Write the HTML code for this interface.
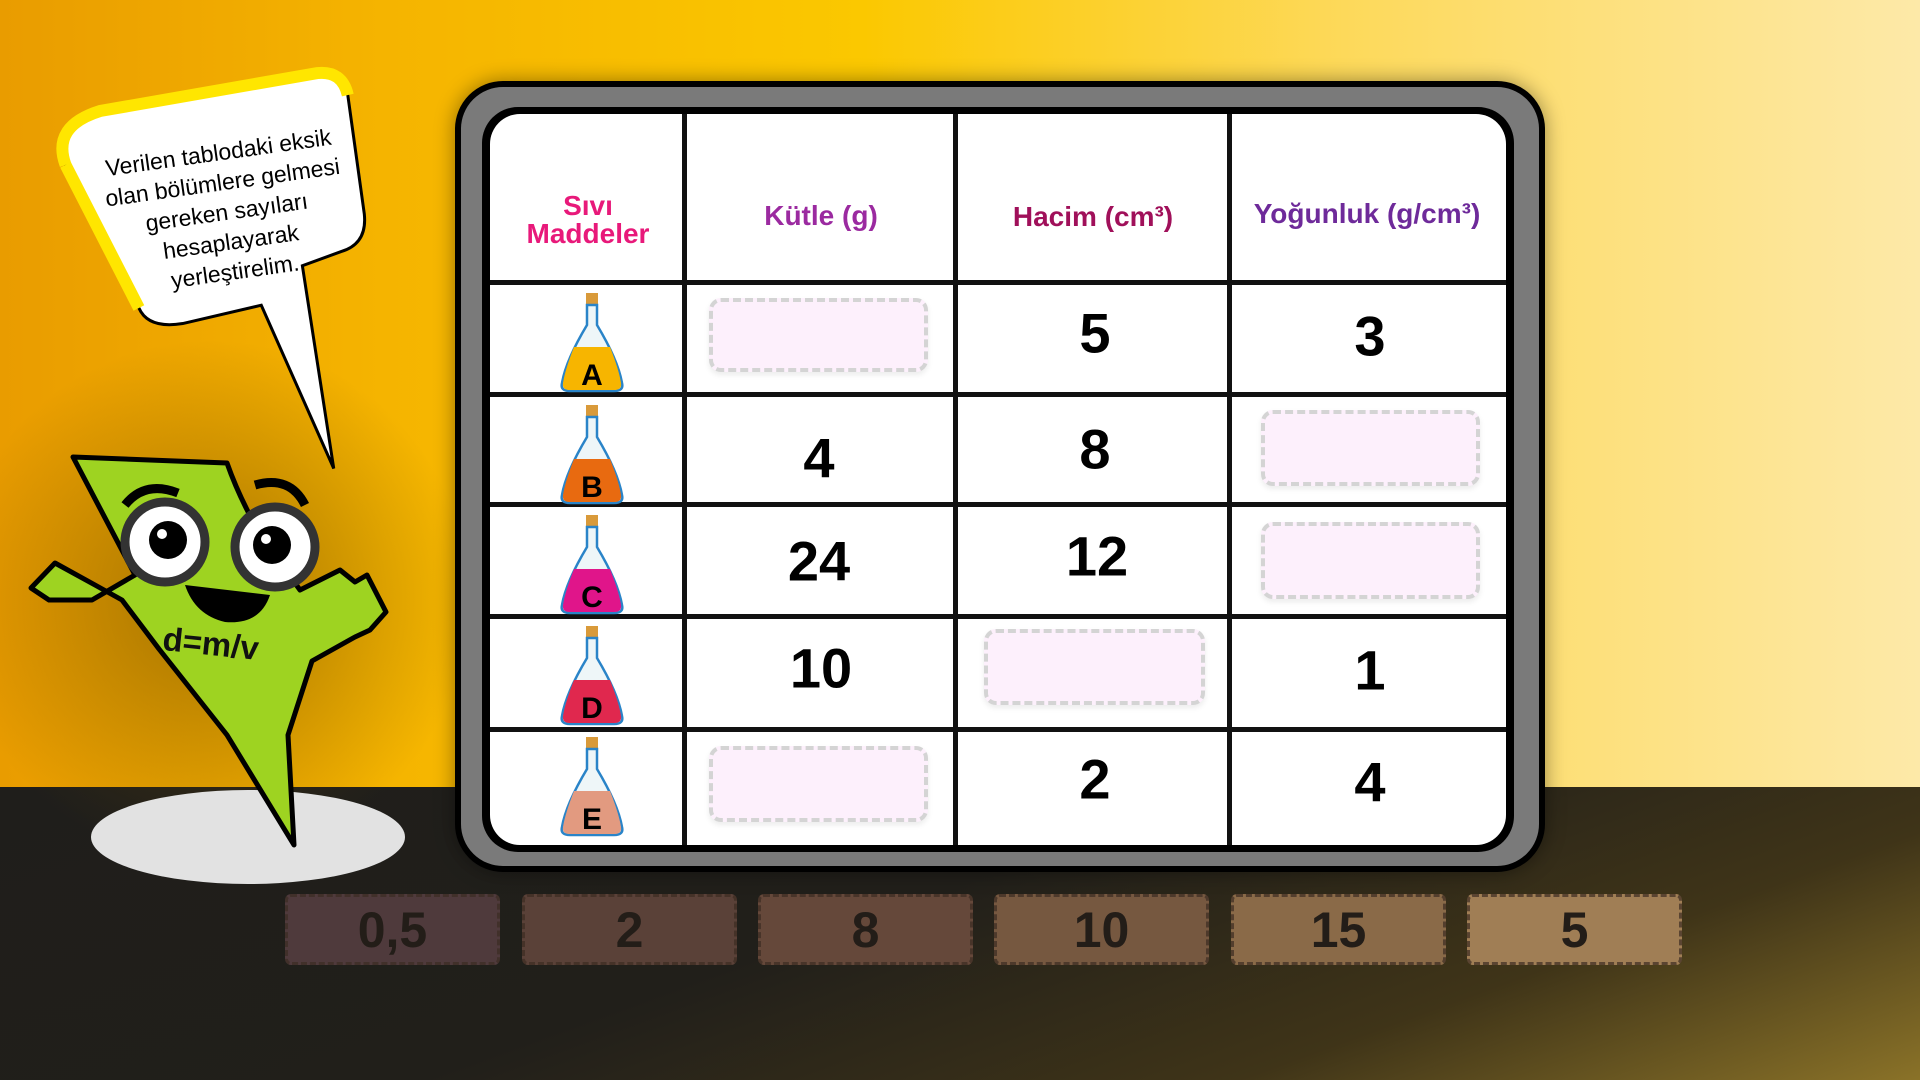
<!DOCTYPE html>
<html><head><meta charset="utf-8"><style>
*{margin:0;padding:0;box-sizing:border-box}
body{width:1920px;height:1080px;overflow:hidden;position:relative;font-family:"Liberation Sans",sans-serif;
background:linear-gradient(90deg,#e99c00 0%,#f5b400 20%,#fbc800 45%,#fdd95a 70%,#fde9a8 100%);}
.abs{position:absolute}
.floor{left:0;top:787px;width:1920px;height:293px;background:linear-gradient(160deg,#1f1e1b 0%,#211f1a 45%,#3f3418 75%,#8a7228 100%)}
.frame{left:455px;top:81px;width:1090px;height:791px;border-radius:48px;background:#7a7a7a;border:6px solid #000;box-shadow:0 0 20px rgba(0,0,0,.4)}
.inner{left:482px;top:107px;width:1032px;height:745px;border-radius:36px;background:#000}
.white{left:490px;top:114px;width:1016px;height:731px;border-radius:30px;background:#fff;overflow:hidden}
.vl{position:absolute;top:114px;height:731px;width:5px;background:#111}
.hl{position:absolute;left:490px;width:1016px;height:5px;background:#111}
.hd{position:absolute;font-weight:bold;font-size:28px;text-align:center;line-height:28px;transform:translate(-50%,-50%);white-space:nowrap}
.num{position:absolute;font-weight:bold;font-size:56px;transform:translate(-50%,-50%);color:#000;font-family:"Liberation Sans",sans-serif}
.pb{position:absolute;background:#fdf0fc;border:4px dashed #d4d4d4;border-radius:12px;box-shadow:0 3px 6px rgba(0,0,0,.08)}
.tile{position:absolute;top:894px;width:215px;height:71px;border:3px dashed rgba(60,45,35,.7);border-radius:6px;font-size:50px;font-weight:bold;color:#231d18;text-align:center;line-height:66px}
</style></head><body>
<div class="abs floor"></div>
<svg class="abs" style="left:0;top:0" width="1920" height="1080">
<defs><radialGradient id="sh" cx="0.5" cy="0.5" r="0.5"><stop offset="0" stop-color="#6a4a00" stop-opacity=".55"/><stop offset="1" stop-color="#6a4a00" stop-opacity="0"/></radialGradient></defs>
<ellipse cx="210" cy="600" rx="260" ry="260" fill="url(#sh)"/>
<ellipse cx="248" cy="837" rx="157" ry="47" fill="#e2e2e2"/>
<!-- bubble -->
<path d="M70 150 Q60 110 110 100 L330 85 Q355 85 358 110 L362 230 Q362 260 335 265 L295 275 L305 480 L250 310 L170 320 Q135 322 128 300 Z" fill="#fff" stroke="#000" stroke-width="3" transform="rotate(-6 210 200)"/>
<path d="M70 150 Q60 110 110 100 L330 85 Q355 85 358 110" fill="none" stroke="#ffe600" stroke-width="12" transform="rotate(-6 210 200)"/>
<path d="M70 150 L128 300" fill="none" stroke="#ffe600" stroke-width="12" transform="rotate(-6 210 200)"/>
<text transform="rotate(-8 225 200)" font-family="Liberation Sans Narrow, Liberation Sans, sans-serif" font-size="23" text-anchor="middle" fill="#000">
<tspan x="225" y="160">Verilen tablodaki eksik</tspan><tspan x="225" y="190">olan bölümlere gelmesi</tspan><tspan x="225" y="220">gereken sayıları</tspan><tspan x="225" y="250">hesaplayarak</tspan><tspan x="225" y="280">yerleştirelim.</tspan></text>
<!-- character -->
<path d="M73 457 L227 463 Q240 500 263 539 L300 590 L340 570 L355 582 L367 575 L386 612 L370 630 L355 637 L312 661 L288 735 L294 845 L227 735 L159 649 L122 600 L95 585 L55 563 L31 588 L49 600 L92 600 L135 575 Z" fill="#9ed321" stroke="#000" stroke-width="5" stroke-linejoin="round"/>
<circle cx="165" cy="542" r="40" fill="#fff" stroke="#333" stroke-width="9"/>
<circle cx="275" cy="547" r="40" fill="#fff" stroke="#333" stroke-width="9"/>
<circle cx="168" cy="540" r="19" fill="#000"/><circle cx="272" cy="545" r="19" fill="#000"/>
<circle cx="162" cy="534" r="5" fill="#fff"/><circle cx="266" cy="539" r="5" fill="#fff"/>
<path d="M125 505 Q145 480 178 493" stroke="#000" stroke-width="9" fill="none"/>
<path d="M255 485 Q290 475 305 505" stroke="#000" stroke-width="9" fill="none"/>
<path d="M185 585 L270 595 Q260 625 225 622 Q195 615 185 585Z" fill="#000"/>
<text x="162" y="656" transform="rotate(6 220 650)" font-size="33" font-weight="bold" fill="#111">d=m/v</text>
</svg>
<div class="abs frame"></div>
<div class="abs inner"></div>
<div class="abs white"></div>
<div class="vl" style="left:682px"></div><div class="vl" style="left:953px"></div><div class="vl" style="left:1227px"></div>
<div class="hl" style="top:280px"></div><div class="hl" style="top:392px"></div><div class="hl" style="top:502px"></div><div class="hl" style="top:614px"></div><div class="hl" style="top:727px"></div>
<div class="hd" style="left:588px;top:220px;color:#e8197a">Sıvı<br>Maddeler</div>
<div class="hd" style="left:821px;top:216px;color:#9b2aa0">Kütle (g)</div>
<div class="hd" style="left:1093px;top:217px;color:#a0105a">Hacim (cm³)</div>
<div class="hd" style="left:1367px;top:214px;color:#6e2a9a">Yoğunluk (g/cm³)</div>
<div class="pb" style="left:709px;top:298px;width:219px;height:74px"></div>
<div class="pb" style="left:1261px;top:410px;width:219px;height:76px"></div>
<div class="pb" style="left:1261px;top:522px;width:219px;height:77px"></div>
<div class="pb" style="left:984px;top:629px;width:221px;height:76px"></div>
<div class="pb" style="left:709px;top:746px;width:219px;height:76px"></div>
<div class="num" style="left:1095px;top:333px">5</div><div class="num" style="left:1370px;top:336px">3</div>
<div class="num" style="left:819px;top:458px">4</div><div class="num" style="left:1095px;top:449px">8</div>
<div class="num" style="left:819px;top:561px">24</div><div class="num" style="left:1097px;top:556px">12</div>
<div class="num" style="left:821px;top:668px">10</div><div class="num" style="left:1370px;top:670px">1</div>
<div class="num" style="left:1095px;top:779px">2</div><div class="num" style="left:1370px;top:782px">4</div>
<svg class="abs" style="left:540px;top:285px" width="100" height="560">
<g font-family="Liberation Sans" font-weight="bold" font-size="30" text-anchor="middle">
<g transform="translate(0,0)"><rect x="46" y="8" width="12" height="12" fill="#d99a3a"/><path d="M47 20 L47 40 Q26 75 22 98 Q20 106 30 106 L74 106 Q84 106 82 98 Q78 75 57 40 L57 20Z" fill="#eef6f8" stroke="#2a84c8" stroke-width="2.5"/><path d="M34 62 L70 62 Q79 85 81 98 Q82 105 74 105 L30 105 Q22 105 23 98 Q25 85 34 62Z" fill="#f7b500"/><text x="52" y="100">A</text></g>
<g transform="translate(0,112)"><rect x="46" y="8" width="12" height="12" fill="#d99a3a"/><path d="M47 20 L47 40 Q26 75 22 98 Q20 106 30 106 L74 106 Q84 106 82 98 Q78 75 57 40 L57 20Z" fill="#eef6f8" stroke="#2a84c8" stroke-width="2.5"/><path d="M34 62 L70 62 Q79 85 81 98 Q82 105 74 105 L30 105 Q22 105 23 98 Q25 85 34 62Z" fill="#e86a10"/><text x="52" y="100">B</text></g>
<g transform="translate(0,222)"><rect x="46" y="8" width="12" height="12" fill="#d99a3a"/><path d="M47 20 L47 40 Q26 75 22 98 Q20 106 30 106 L74 106 Q84 106 82 98 Q78 75 57 40 L57 20Z" fill="#eef6f8" stroke="#2a84c8" stroke-width="2.5"/><path d="M34 62 L70 62 Q79 85 81 98 Q82 105 74 105 L30 105 Q22 105 23 98 Q25 85 34 62Z" fill="#e0158a"/><text x="52" y="100">C</text></g>
<g transform="translate(0,333)"><rect x="46" y="8" width="12" height="12" fill="#d99a3a"/><path d="M47 20 L47 40 Q26 75 22 98 Q20 106 30 106 L74 106 Q84 106 82 98 Q78 75 57 40 L57 20Z" fill="#eef6f8" stroke="#2a84c8" stroke-width="2.5"/><path d="M34 62 L70 62 Q79 85 81 98 Q82 105 74 105 L30 105 Q22 105 23 98 Q25 85 34 62Z" fill="#e0284e"/><text x="52" y="100">D</text></g>
<g transform="translate(0,444)"><rect x="46" y="8" width="12" height="12" fill="#d99a3a"/><path d="M47 20 L47 40 Q26 75 22 98 Q20 106 30 106 L74 106 Q84 106 82 98 Q78 75 57 40 L57 20Z" fill="#eef6f8" stroke="#2a84c8" stroke-width="2.5"/><path d="M34 62 L70 62 Q79 85 81 98 Q82 105 74 105 L30 105 Q22 105 23 98 Q25 85 34 62Z" fill="#e29a80"/><text x="52" y="100">E</text></g>
</g></svg>
<div class="tile" style="left:285px;background:#4f3a3c">0,5</div>
<div class="tile" style="left:522px;background:#5a4138">2</div>
<div class="tile" style="left:758px;background:#65483a">8</div>
<div class="tile" style="left:994px;background:#765840">10</div>
<div class="tile" style="left:1231px;background:#8a6a48">15</div>
<div class="tile" style="left:1467px;background:#a07e55">5</div>
</body></html>
